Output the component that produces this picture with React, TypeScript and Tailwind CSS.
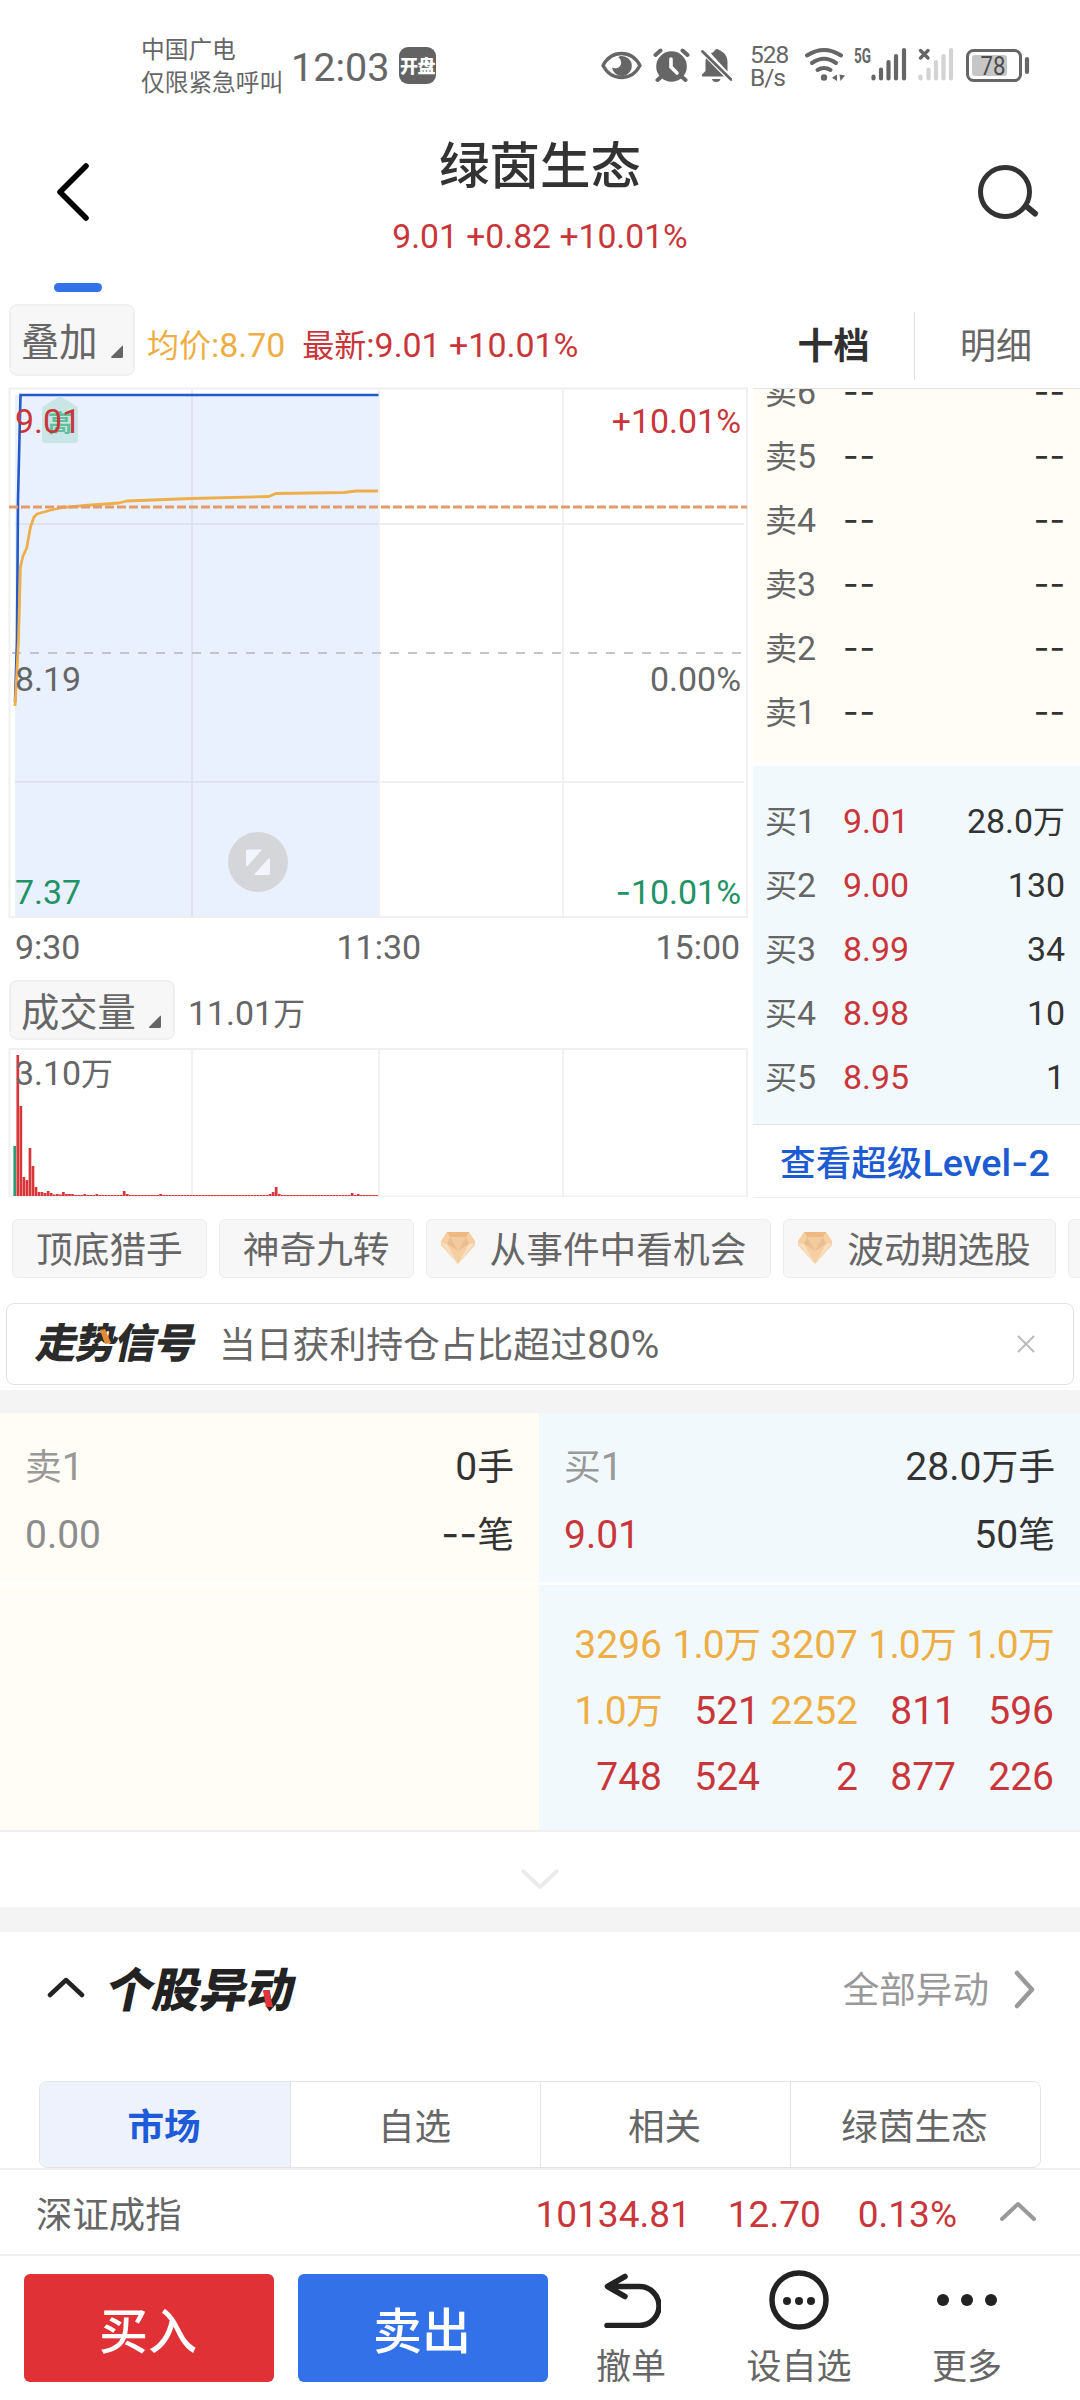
import type { ReactNode } from "react";
import clsx from "clsx";

type Level = { label: string; price: string; amount: string };

const sellLevels: Level[] = ["卖6", "卖5", "卖4", "卖3", "卖2", "卖1"].map((label) => ({
  label,
  price: "--",
  amount: "--",
}));

const buyLevels: Level[] = [
  { label: "买1", price: "9.01", amount: "28.0万" },
  { label: "买2", price: "9.00", amount: "130" },
  { label: "买3", price: "8.99", amount: "34" },
  { label: "买4", price: "8.98", amount: "10" },
  { label: "买5", price: "8.95", amount: "1" },
];

const queueOrders = [
  "3296", "1.0万", "3207", "1.0万", "1.0万",
  "1.0万", "521", "2252", "811", "596",
  "748", "524", "2", "877", "226",
];

const chips = [
  { name: "顶底猎手", vip: false },
  { name: "神奇九转", vip: false },
  { name: "从事件中看机会", vip: true },
  { name: "波动期选股", vip: true },
];

const tabs = ["市场", "自选", "相关", "绿茵生态"];

// minute volumes, in px of the volume chart; everything not listed is a quiet minute
const volumes = [
  50, 141, 90, 19, 16, 48, 30, 9, 4, 4, 3, 5, 3, 1.5, 2, 1.5, 4, 2, 2, 2, 1, 1, 1, 2, 1, 1, 1, 2,
];
const volumeSpikes: Record<number, number> = { 36: 5, 37: 2, 48: 2, 84: 2, 85: 4, 86: 9, 87: 2, 111: 3, 113: 2 };

const avgLine =
  "15,706 16.5,680 18.5,640 20.4,567 23,556 26.7,548 30.5,527 34,517 37,514 51,510 63,507.5 85,505.5 119,503 127,501 191,498.5 269,496.5 276,493.5 344,492.5 356,491 378,491";

// Latin runs use a slightly larger face than the Chinese ones
function Txt({ children }: { children: string }) {
  const runs = children.match(/[\u2e80-\uffff]+|-+|[^\u2e80-\uffff-]+/g) ?? [];
  return (
    <>
      {runs.map((run, i) => {
        if (/[\u2e80-\uffff]/.test(run)) return <span key={i}>{run}</span>;
        return (
          <span key={i} className={clsx("text-[1.06em] leading-none", run[0] === "-" ? "font-[Inter]" : "font-[Roboto]")}>
            {run}
          </span>
        );
      })}
    </>
  );
}

function Chevron({ d, width, height, className, stroke = 4 }: { d: string; width: number; height: number; className?: string; stroke?: number }) {
  return (
    <svg width={width} height={height} viewBox={`0 0 ${width} ${height}`} className={className} fill="none" stroke="currentColor" strokeWidth={stroke} strokeLinecap="round" strokeLinejoin="round">
      <path d={d} />
    </svg>
  );
}

function StatusBar() {
  return (
    <div className="flex h-[116px] items-start pl-[141px] text-[#666]">
      <div className="mt-[32px] w-[150px] shrink-0 whitespace-nowrap text-[23.7px] leading-[33px]">
        <div>中国广电</div>
        <div>仅限紧急呼叫</div>
      </div>
      <div className="mt-[48px] w-[108px] shrink-0 font-[Roboto] text-[39.5px] leading-10">12:03</div>
      <div className="mt-[47px] flex size-[37px] shrink-0 items-center justify-center rounded-[9px] bg-[#636363] pb-[2px] text-[18px] font-black leading-none tracking-[-0.5px] text-white">
        开盘
      </div>

      <svg width="132" height="36" viewBox="600 48 132 36" className="ml-[164px] mt-[48px] shrink-0" fill="currentColor">
        {/* eye */}
        <path d="M603 65.500C607 58 614 53.500 621.500 53.500S636 58 640 65.500C636 73 629 77.500 621.500 77.500S607 73 603 65.500Z" fill="none" stroke="currentColor" strokeWidth="3.300" />
        <path d="M621.500 56a10 10 0 1 1-9.500 11.500c5 2.500 10-1 9-6-.3-2-1.500-3.200-2.800-4.200 1-.9 2.200-1.300 3.300-1.300Z" />
        {/* alarm */}
        <circle cx="671.500" cy="66.500" r="15.300" />
        <path d="M655.500 55l5-4.500M687.500 55l-5-4.500M661 77l-3.500 3M682 77l3.500 3" fill="none" stroke="currentColor" strokeWidth="4" strokeLinecap="round" />
        <path d="M671 59v8l6 6" fill="none" stroke="#fff" strokeWidth="3.600" strokeLinecap="round" />
        {/* bell, muted */}
        <path d="M702 76.500v-2l3.500-3.500v-9c0-1.500.2-2.500.6-3.800L724 76.500ZM711 53.500c1.500-1 3-1.500 4-3.500q2-2 4 0c5 2 8.500 6 8.500 12v9.500Z" />
        <path d="M702.500 51.500L731 79.500" fill="none" stroke="currentColor" strokeWidth="2.800" strokeLinecap="round" />
        <path d="M712 79h8.500a4.300 3.600 0 0 1-8.500 0Z" />
      </svg>
      <div className="ml-[18px] mt-[43px] w-[44px] shrink-0 whitespace-nowrap font-[Roboto] text-[24.5px] leading-[23px] tracking-[-1px]">
        <div>528</div>
        <div>B/s</div>
      </div>
      <svg width="240" height="40" viewBox="794 44 240 40" className="mt-[44px] shrink-0" fill="none" stroke="currentColor" strokeLinecap="round">
        {/* wifi */}
        <path d="M807 55.500q17-11 34 0" strokeWidth="4" />
        <path d="M812 63q12-8.500 24 0M817.500 70q6.500-4 13 0" strokeWidth="4" />
        <circle cx="824" cy="77.500" r="3.200" fill="currentColor" stroke="none" />
        <path d="M837 74.500v6.500l-5-3.200ZM839.500 74.500l5.500 1-4.500 5.500Z" fill="currentColor" stroke="none" />
        <text x="854" y="62.500" textLength="17" lengthAdjust="spacingAndGlyphs" fontFamily="Roboto" fontSize="19.500" fontWeight="700" fill="currentColor" stroke="none">5G</text>
        <path d="M873.500 76.500v2M881 69.500v9M888.500 62v16.500M896 56v22.500M904 50v28.500" strokeWidth="4.200" />
        <g stroke="#d3d3d3" strokeWidth="4.200">
          <path d="M920.500 76.500v2M928.500 69.500v9M936 62v16.500M943.500 56v22.500M951 50v28.500" />
        </g>
        <path d="M920.500 50.500l7.500 7.500M928 50.500l-7.500 7.500" strokeWidth="3.400" />
        {/* battery */}
        <rect x="967.500" y="50.500" width="53" height="30" rx="6" strokeWidth="3" />
        <rect x="972" y="55" width="35" height="21" rx="3" fill="#c6c6c6" stroke="none" />
        <path d="M1027 59v13" strokeWidth="4.200" />
        <text x="980.500" y="74.800" textLength="25" lengthAdjust="spacingAndGlyphs" fontFamily="Roboto" fontSize="26" fill="#4c4c4c" stroke="none">78</text>
      </svg>
    </div>
  );
}

function Header() {
  return (
    <header className="flex h-[188px] justify-between">
      <div className="flex w-[120px] flex-col pl-[54px]">
        <Chevron d="M32 4L6 30l26 26" width={38} height={60} stroke={5.5} className="mt-[46px] text-black" />
        <div className="mt-[61px] h-[9px] w-12 rounded-full bg-[#3371e8]" />
      </div>
      <div className="flex flex-col items-center">
        <h1 className="mt-[15px] text-[50.5px] font-medium leading-[62px] text-[#333]">绿茵生态</h1>
        <div className="mt-[24px] font-[Roboto] text-[33.7px] leading-10 text-[#c9363a]">9.01 +0.82 +10.01%</div>
      </div>
      <div className="w-[120px] pl-[14px] pt-[44px]">
        <svg width="70" height="64" viewBox="0 0 70 64" fill="none" stroke="#333" strokeWidth="5" strokeLinecap="round">
          <circle cx="31" cy="32" r="24.500" />
          <path d="M52 46l9 7.500" strokeWidth="6" />
        </svg>
      </div>
    </header>
  );
}

function PickerButton({ children, className }: { children: ReactNode; className: string }) {
  return (
    <button className={clsx("flex items-center rounded-lg border-2 border-[#f0f0f0] bg-[#f7f7f7] pl-[10px] text-[38.3px] leading-none text-[#666]", className)}>
      {children}
      <svg width="14" height="14" viewBox="0 0 14 14" className="ml-[12px] mt-[24px]" fill="#666">
        <path d="M13 1v10.500q0 1.500-1.500 1.500H2q-1.500 0-.5-1.500L12 1q1-.8 1 0Z" />
      </svg>
    </button>
  );
}

function PriceChart() {
  return (
    <div className="relative ml-2 h-[531px] w-[741px] text-[32px] leading-10 text-[#666]">
      <svg width="741" height="531" viewBox="8 387 741 531" fill="none">
        <rect x="15" y="395" width="363.500" height="522" fill="#eaf1fe" />
        <g stroke="#dfe3ee" strokeWidth="2">
          <path d="M192 395v522M15 524h363M15 782h363" />
        </g>
        <g stroke="#f0f0f0" strokeWidth="2">
          <path d="M9.500 388.500h737.500v528.500H9.500ZM379 389v528M563 389v528M192 389v6M379 524h365M379 782h365" />
        </g>
        <path d="M12 653H743" stroke="#c4c4cc" strokeWidth="2" strokeDasharray="9 9" />
        <path d="M15 702L17 640L18 500L20.500 395H378.500" stroke="#2359c8" strokeWidth="2.600" />
        <polyline points={avgLine} stroke="#eeae4a" strokeWidth="2.800" strokeLinejoin="round" />
        <path d="M9 507H747" stroke="#e59a69" strokeWidth="3" strokeDasharray="9 3" />
        <path d="M60 396l18 11v33q0 3-3 3H45q-3 0-3-3v-33Z" fill="#c9e5e6" />
        <circle cx="258" cy="862" r="30" fill="#d5d6da" />
        <path d="M246 851q0-1.500 1.500-1.500h13q2 0 .5 1.500L248 865.500q-2 1.500-2-.5ZM270 873.500q0 1.500-1.500 1.500h-13q-2 0-.5-1.500L268 859q2-1.500 2 .5Z" fill="#f2f5fc" />
      </svg>
      <span className="absolute left-[40px] top-[17px] text-[24px] font-bold leading-9 text-[#5dbf9b]">高</span>
      <span className="absolute left-[7px] top-[12px] text-[#c9363a]"><Txt>9.01</Txt></span>
      <span className="absolute right-[8px] top-[12px] text-[#c9363a]"><Txt>+10.01%</Txt></span>
      <span className="absolute left-[7px] top-[270px]"><Txt>8.19</Txt></span>
      <span className="absolute right-[8px] top-[270px]"><Txt>0.00%</Txt></span>
      <span className="absolute left-[7px] top-[483px] text-[#209266]"><Txt>7.37</Txt></span>
      <span className="absolute right-[8px] top-[483px] text-[#209266]"><Txt>-10.01%</Txt></span>
    </div>
  );
}

function VolumeChart() {
  return (
    <div className="relative ml-2 h-[149px] w-[741px] text-[32px] leading-10 text-[#666]">
      <svg width="741" height="149" viewBox="8 1048 741 149">
        <path d="M9.500 1049h737.500v147.500H9.500ZM192 1049v147M379 1049v147M563 1049v147" fill="none" stroke="#f0f0f0" strokeWidth="2" />
        {Array.from({ length: 120 }, (_, i) => {
          const h = volumeSpikes[i] ?? volumes[i] ?? 1;
          return <rect key={i} x={13.4 + i * 3.04} y={1196 - h} width="2.700" height={h} fill={i === 0 ? "#2c9a72" : "#d9363a"} />;
        })}
      </svg>
      <span className="absolute left-[7px] top-[3px]"><Txt>3.10万</Txt></span>
    </div>
  );
}

function LevelRow({ level, priceClass }: { level: Level; priceClass: string }) {
  return (
    <div className="flex h-16 items-center pl-[12px] pr-[15px] text-[32px] leading-10">
      <span className="w-[78px] text-[#666]"><Txt>{level.label}</Txt></span>
      <span className={priceClass}><Txt>{level.price}</Txt></span>
      <span className="ml-auto text-[#333]"><Txt>{level.amount}</Txt></span>
    </div>
  );
}

function OrderBook() {
  return (
    <div className="w-[327px]">
      <div className="flex h-[85px] items-center border-b border-[#e4e4e4] text-[36px] leading-none">
        <div className="flex w-[161px] justify-center pb-[7px] font-bold text-[#303030]">十档</div>
        <div className="h-[68px] w-px bg-[#e0e0e0]" />
        <div className="flex flex-1 justify-center pb-[7px] pr-[3px] text-[#666]">明细</div>
      </div>
      <div className="flex h-[377px] flex-col justify-end overflow-hidden border-b-4 border-white bg-[#fffdf5] pb-[20px]">
        {sellLevels.map((level) => (
          <div key={level.label} className="shrink-0">
            <LevelRow level={level} priceClass="tracking-[1px] text-[#333]" />
          </div>
        ))}
      </div>
      <div className="h-[359px] border-b border-[#e4e4e4] bg-[#f2f9fd] pt-[21px]">
        {buyLevels.map((level) => (
          <LevelRow key={level.label} level={level} priceClass="text-[#c9363a]" />
        ))}
      </div>
      <div className="flex h-[73px] items-center justify-center border-b border-[#eee] pr-[3px] pt-[3px] text-[35.6px] font-medium leading-none text-[#1d5bd2]">
        <span><Txt>查看超级Level-2</Txt></span>
      </div>
    </div>
  );
}

function Diamond() {
  return (
    <svg width="36" height="32" viewBox="0 0 36 32" className="mr-[14px] shrink-0">
      <path d="M7 0h22l6 9v4L18 32 1 13V9Z" fill="#f5cfa2" />
      <path d="M7 0h22l-3 5H10Z" fill="#edb983" />
      <path d="M10 5h16l3 7-11 7-11-7Z" fill="#e9bf92" />
      <path d="M1 11l6 1 11 20ZM29 12l6-1-17 21Z" fill="#fadfbf" />
      <path d="M10 5l8 14 8-14Z" fill="#f3cb9c" />
    </svg>
  );
}

function Chips() {
  return (
    <div className="flex gap-3 overflow-hidden pl-3 pt-[20px]">
      {chips.map((chip) => (
        <div
          key={chip.name}
          className={clsx(
            "flex h-[59px] shrink-0 items-center rounded-md border border-[#ececec] bg-[#f7f7f7] pb-[2px] text-[36.7px] leading-none text-[#666]",
            chip.vip ? "pl-[13px] pr-[24px]" : "px-[23px]"
          )}
        >
          {chip.vip && <Diamond />}
          <span className="whitespace-nowrap">{chip.name}</span>
        </div>
      ))}
      <div className="h-[59px] w-16 shrink-0 rounded-md border border-[#ececec] bg-[#f7f7f7]" />
    </div>
  );
}

function SignalCard() {
  return (
    <div className="mx-[6px] mt-[25px] flex h-[82px] items-center rounded-lg border border-[#e2e2e2] pl-[31px] pr-[38px]">
      <div className="relative w-[181px] whitespace-nowrap pb-[7px] text-[41px] font-black leading-none tracking-[-1.5px] text-[#2b2b2b]">
        <div className="-skew-x-12">走势信号</div>
        <svg width="12" height="16" viewBox="0 0 12 16" className="absolute left-[62px] top-[9px]">
          <path d="M0 1l5-1 6 14-6 1Z" fill="#e58a35" />
        </svg>
      </div>
      <div className="pt-[2px] text-[36.8px] leading-none text-[#666]"><Txt>当日获利持仓占比超过80%</Txt></div>
      <svg width="18" height="18" viewBox="0 0 18 18" className="ml-auto" stroke="#bbb" strokeWidth="2">
        <path d="M1 1l16 16M17 1L1 17" />
      </svg>
    </div>
  );
}

function QueueSummary({ side, price, volume, count, className }: { side: string; price: ReactNode; volume: string; count: string; className: string }) {
  return (
    <div className={clsx("h-[169px] pl-[25px] pr-[25px] pt-[17px] text-[36.8px] leading-[68px] text-[#333]", className)}>
      <div className="flex justify-between">
        <span className="text-[#999]"><Txt>{side}</Txt></span>
        <span><Txt>{volume}</Txt></span>
      </div>
      <div className="flex justify-between">
        {price}
        <span><Txt>{count}</Txt></span>
      </div>
    </div>
  );
}

function QueuePanel() {
  return (
    <div className="flex h-[419px] border-b-2 border-[#f0f0f0]">
      <div className="flex w-[539px] flex-col gap-[3px]">
        <QueueSummary side="卖1" price={<span className="text-[#8c8c8c]"><Txt>0.00</Txt></span>} volume="0手" count="--笔" className="bg-[#fffdf5]" />
        <div className="flex-1 bg-[#fffdf5]" />
      </div>
      <div className="flex w-[541px] flex-col gap-[3px]">
        <QueueSummary side="买1" price={<span className="text-[#c9363a]"><Txt>9.01</Txt></span>} volume="28.0万手" count="50笔" className="bg-[#f2f9fd]" />
        <div className="grid flex-1 grid-cols-5 content-start bg-[#f2f9fd] pl-[25px] pr-[26px] pt-[24px] text-right text-[36.8px] leading-[66px]">
          {queueOrders.map((order, i) => (
            <span
              key={i}
              className={clsx(order.length > 3 ? "text-[#edae45]" : "text-[#c9363a]", order.includes("万") && "tracking-[-0.8px]")}
            >
              <Txt>{order}</Txt>
            </span>
          ))}
        </div>
      </div>
    </div>
  );
}

function Movements() {
  return (
    <section>
      <div className="flex h-[116px] items-center pl-[47px] pr-[44px]">
        <Chevron d="M3 18L19 3l16 15" width={38} height={21} stroke={4.5} className="mb-[5px] text-[#222]" />
        <div className="relative ml-[23px] whitespace-nowrap pb-[8px] text-[47px] font-black leading-none text-[#222]">
          <div className="-skew-x-12">个股异动</div>
          <svg width="12" height="18" viewBox="0 0 12 18" className="absolute left-[154px] top-[27px]">
            <path d="M1 0h6l4 17H4Z" fill="#e0363b" />
          </svg>
        </div>
        <span className="ml-auto pb-[3px] text-[36.6px] leading-none text-[#999]">全部异动</span>
        <Chevron d="M4 3l15 16.500L4 36" width={23} height={39} stroke={4.5} className="ml-[24px] mb-[2px] text-[#999]" />
      </div>
      <div className="mx-[39px] mt-[33px] grid h-[87px] grid-cols-4 rounded-lg border border-[#e4e4e4]">
        {tabs.map((tab, i) => (
          <div
            key={tab}
            className={clsx(
              "flex items-center justify-center pr-[2px] pt-[2px] text-[36.6px] leading-none",
              i === 0 ? "rounded-l-lg bg-[#edf2fd] font-bold text-[#1d5bd9]" : "border-l border-[#e4e4e4] text-[#666]"
            )}
          >
            {tab}
          </div>
        ))}
      </div>
    </section>
  );
}

function IndexBar() {
  return (
    <div className="flex h-[88px] items-center border-y-2 border-[#f0f0f0] pl-[36px] pr-[43px] text-[36.4px] leading-10 text-[#666]">
      <span>深证成指</span>
      <div className="ml-auto flex gap-[37px] pt-[5px] font-[Roboto] text-[37px] text-[#c9363a]">
        <span>10134.81</span>
        <span>12.70</span>
        <span>0.13%</span>
      </div>
      <Chevron d="M3 18L19 3l16 15" width={38} height={21} stroke={4} className="mb-[2px] ml-[42px] text-[#999]" />
    </div>
  );
}

function Action({ icon, label }: { icon: ReactNode; label: string }) {
  return (
    <div className="flex w-[168px] flex-col items-center text-[35px] leading-none text-[#666]">
      <div className="flex h-[60px] items-center">{icon}</div>
      <span className="mt-[16px]">{label}</span>
    </div>
  );
}

function TradeBar() {
  return (
    <div className="flex h-[144px] pl-6 pt-[14px]">
      <button className="mt-[4px] h-[108px] w-[250px] rounded-md bg-[#e03136] pb-[2px] pr-[2px] text-[49px] font-medium leading-none text-white">买入</button>
      <button className="-mr-[1px] ml-6 mt-[4px] h-[108px] w-[250px] rounded-md bg-[#3371e8] pb-[2px] pr-[2px] text-[49px] font-medium leading-none text-white">卖出</button>
      <Action
        label="撤单"
        icon={
          <svg width="58" height="56" viewBox="0 0 58 56" className="ml-[2px]" fill="none" stroke="#222" strokeWidth="5.500" strokeLinecap="round" strokeLinejoin="round">
            <path d="M22 4.500L4.500 14.500L22 24.500M5 14.500h31.500a19.500 19.500 0 0 1 0 39H4" />
          </svg>
        }
      />
      <Action
        label="设自选"
        icon={
          <svg width="60" height="60" viewBox="0 0 60 60" fill="#222">
            <circle cx="30" cy="30" r="27" fill="none" stroke="#222" strokeWidth="5.500" />
            <circle cx="18" cy="31" r="4" />
            <circle cx="30" cy="31" r="4" />
            <circle cx="42" cy="31" r="4" />
          </svg>
        }
      />
      <Action
        label="更多"
        icon={
          <svg width="60" height="12" viewBox="0 0 60 12" fill="#222">
            <circle cx="6" cy="6" r="6" />
            <circle cx="30" cy="6" r="6" />
            <circle cx="54" cy="6" r="6" />
          </svg>
        }
      />
    </div>
  );
}

export default function App() {
  return (
    <div className="h-[2400px] w-[1080px] overflow-hidden bg-white font-['Noto_Sans_CJK_SC',sans-serif]">
      <StatusBar />
      <Header />

      <div className="flex h-[895px]">
        <div className="w-[753px]">
          <div className="flex h-[83px] items-start pl-[9px] text-[32px] leading-none">
            <PickerButton className="h-[72px] w-[126px]">叠加</PickerButton>
            <span className="ml-[12px] mt-[17px] leading-[44px] text-[#edae45]"><Txt>均价:8.70</Txt></span>
            <span className="ml-[17px] mt-[17px] leading-[44px] text-[#c9363a]"><Txt>最新:9.01 +10.01%</Txt></span>
          </div>
          <PriceChart />
          <div className="flex h-[62px] justify-between pl-[15px] pr-[13px] pt-[7px] text-[32px] leading-10 text-[#666]">
            <span className="w-[87px]"><Txt>9:30</Txt></span>
            <span><Txt>11:30</Txt></span>
            <span><Txt>15:00</Txt></span>
          </div>
          <div className="flex h-[68px] items-start pl-[9px] text-[32px] leading-none text-[#666]">
            <PickerButton className="h-[60px] w-[166px]">成交量</PickerButton>
            <span className="ml-[13px] mt-[9px] leading-[44px]"><Txt>11.01万</Txt></span>
          </div>
          <VolumeChart />
        </div>
        <OrderBook />
      </div>

      <Chips />
      <SignalCard />
      <div className="mt-[5px] h-[23px] bg-[#f4f4f4]" />
      <QueuePanel />
      <div className="flex h-[75px] items-center justify-center">
        <Chevron d="M3 3l17 16L37 3" width={40} height={22} stroke={4} className="mt-[18px] text-[#ebebeb]" />
      </div>
      <div className="h-[25px] bg-[#f4f4f4]" />
      <Movements />
      <IndexBar />
      <TradeBar />
    </div>
  );
}
